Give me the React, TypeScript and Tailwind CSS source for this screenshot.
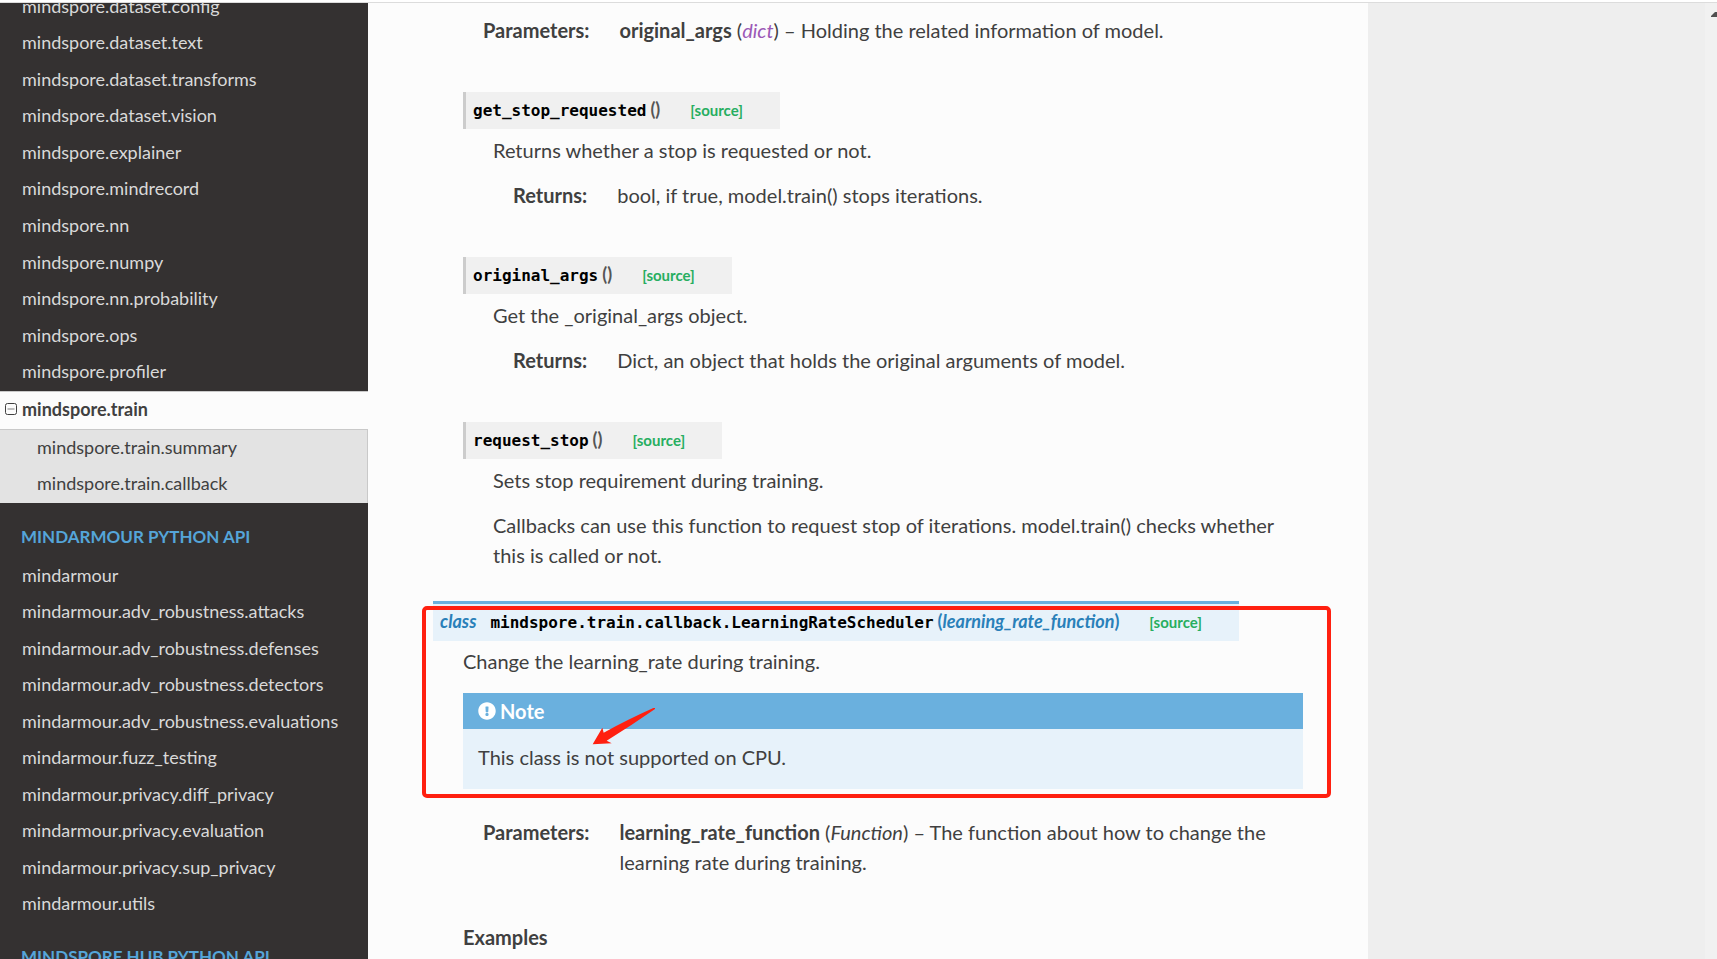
import React from "react";
import { FaExclamationCircle } from "react-icons/fa";

const sporeModules = [
  "mindspore.dataset.config",
  "mindspore.dataset.text",
  "mindspore.dataset.transforms",
  "mindspore.dataset.vision",
  "mindspore.explainer",
  "mindspore.mindrecord",
  "mindspore.nn",
  "mindspore.numpy",
  "mindspore.nn.probability",
  "mindspore.ops",
  "mindspore.profiler",
];

const armourModules = [
  "mindarmour",
  "mindarmour.adv_robustness.attacks",
  "mindarmour.adv_robustness.defenses",
  "mindarmour.adv_robustness.detectors",
  "mindarmour.adv_robustness.evaluations",
  "mindarmour.fuzz_testing",
  "mindarmour.privacy.diff_privacy",
  "mindarmour.privacy.evaluation",
  "mindarmour.privacy.sup_privacy",
  "mindarmour.utils",
];

function NavItem({ name }: { name: string }) {
  return (
    <li className="flex items-center pb-[3px]">
      <a href="#" className="block w-full pl-[22px] text-[#d9d9d9]">
        {name}
      </a>
    </li>
  );
}

function Caption({ children }: { children: React.ReactNode }) {
  return (
    <p className="mt-3.5 mb-px pl-[21px] text-[17px] leading-10 font-bold text-[#55a5d9] uppercase">
      {children}
    </p>
  );
}

function Sidebar() {
  return (
    <nav className="w-[368px] shrink-0 overflow-hidden bg-[#343131] text-lg leading-[22px]">
      {/* list is scrolled a little past its first entry */}
      <ul className="-mt-3.5 grid h-[402px] auto-rows-fr">
        {sporeModules.map((name) => (
          <NavItem key={name} name={name} />
        ))}
      </ul>
      <div className="flex h-[39px] items-center gap-[5px] border-y border-[#c9c9c9] bg-[#fcfcfc] pb-[3px] pl-[5px] font-bold text-[#404040]">
        <button type="button" aria-label="Collapse mindspore.train">
          <svg className="size-3" viewBox="0 0 12 12" fill="none">
            <rect x="0.5" y="0.5" width="11" height="11" rx="2" stroke="#404040" />
            <path d="M2.5 6h7" stroke="#808080" />
          </svg>
        </button>
        <a href="#">mindspore.train</a>
      </div>
      <ul className="grid h-[73px] auto-rows-fr border-r border-[#c9c9c9] bg-[#e3e3e3] pl-[37px] text-[#404040]">
        <li className="flex items-center pb-[3px]">
          <a href="#">mindspore.train.summary</a>
        </li>
        <li className="flex items-center pb-[3px]">
          <a href="#">mindspore.train.callback</a>
        </li>
      </ul>
      <Caption>MindArmour Python API</Caption>
      <ul className="grid h-[365px] auto-rows-fr">
        {armourModules.map((name) => (
          <NavItem key={name} name={name} />
        ))}
      </ul>
      <Caption>MindSpore Hub Python API</Caption>
    </nav>
  );
}

function CodeName({ children }: { children: React.ReactNode }) {
  return (
    <code className="pr-1 font-['DejaVu_Sans_Mono',monospace] text-base leading-none font-bold text-black">
      {children}
    </code>
  );
}

function SourceLink() {
  return (
    <a href="#" className="ml-[30px] text-[15px] leading-none font-bold text-[#27ae60]">
      [source]
    </a>
  );
}

function Field({ label, children }: { label: string; children: React.ReactNode }) {
  return (
    <dl className="flex gap-[30px] pl-5">
      <dt className="font-bold">{label}:</dt>
      <dd>{children}</dd>
    </dl>
  );
}

function Method({ name, children }: { name: string; children: React.ReactNode }) {
  return (
    <section className="mt-[47px]">
      <h3 className="mb-1.5 flex w-fit items-baseline border-l-3 border-[#cccccc] bg-[#f0f0f0] pt-1.5 pr-[37px] pb-2 pl-[7px] text-lg leading-[23px]">
        <CodeName>{name}</CodeName>
        <span className="font-bold text-[#555555]">()</span>
        <SourceLink />
      </h3>
      <div className="flex flex-col gap-[15px] pl-[30px]">{children}</div>
    </section>
  );
}

export default function App() {
  return (
    <div className="flex h-screen flex-col overflow-hidden bg-[#eeeeee] font-[Lato,sans-serif] text-[#404040]">
      <div className="h-[3px] shrink-0 border-b border-[#dcdcdc] bg-white" />
      <div className="flex min-h-0 flex-1">
        <Sidebar />
        <main className="max-w-[1000px] flex-1 overflow-hidden bg-[#fcfcfc] px-[65px] pt-3 text-xl leading-[30px]">
          <div className="pl-[30px]">
            <Field label="Parameters">
              <strong>original_args</strong> (<a href="#" className="text-[#9b59b6] italic">dict</a>) – Holding the
              related information of model.
            </Field>

            <Method name="get_stop_requested">
              <p>Returns whether a stop is requested or not.</p>
              <Field label="Returns">bool, if true, model.train() stops iterations.</Field>
            </Method>

            <Method name="original_args">
              <p>Get the _original_args object.</p>
              <Field label="Returns">Dict, an object that holds the original arguments of model.</Field>
            </Method>

            <Method name="request_stop">
              <p>Sets stop requirement during training.</p>
              <p>
                Callbacks can use this function to request stop of iterations. model.train() checks whether this is
                called or not.
              </p>
            </Method>
          </div>

          <section className="relative mt-[31px]">
            <h2 className="mb-[5px] flex w-fit items-baseline border-t-3 border-[#6ab0de] bg-[#e7f2fa] pt-1.5 pr-[37px] pb-2 pl-[7px] text-lg leading-[23px] font-bold text-[#2980b9]">
              <em className="mr-3.5">class</em>
              <CodeName>mindspore.train.callback.LearningRateScheduler</CodeName>
              <span>(</span>
              <em>learning_rate_function</em>
              <span>)</span>
              <SourceLink />
            </h2>
            <div className="pl-[30px]">
              <p>Change the learning_rate during training.</p>
              <div className="mt-[17px] mb-7 bg-[#e7f2fa]">
                <p className="flex h-9 items-center gap-1 bg-[#6ab0de] px-[15px] pb-px font-bold text-white">
                  <FaExclamationCircle className="size-[18px]" />
                  Note
                </p>
                <p className="px-[15px] pt-[13px] pb-[17px]">This class is not supported on CPU.</p>
              </div>
              <Field label="Parameters">
                <strong>learning_rate_function</strong> (<em>Function</em>) – The function about how to change the
                learning rate during training.
              </Field>
              <p className="mt-[45px] font-bold">Examples</p>
            </div>

            {/* red marker frame and arrow drawn over the class entry */}
            <div className="pointer-events-none absolute top-[5px] -right-7 -left-[11px] h-48 rounded-[5px] border-4 border-[#ff2010]" />
            <svg
              className="pointer-events-none absolute top-[106px] left-[159px] h-[38px] w-16"
              viewBox="546 381 192 114"
              fill="#ff2010"
            >
              <path d="M548 493 577 443 581 458Q650 420 730 384L735 384 735 387Q665 436 590 482L605 490Z" />
            </svg>
          </section>
        </main>
        <div className="ml-auto w-3 bg-[#f1f1f1]">
          <svg className="mt-[9px] ml-1.5 h-[5px] w-1.5" viewBox="0 0 6 5" fill="#505050">
            <path d="M0 5V4L4 0H6V5Z" />
          </svg>
        </div>
      </div>
    </div>
  );
}
